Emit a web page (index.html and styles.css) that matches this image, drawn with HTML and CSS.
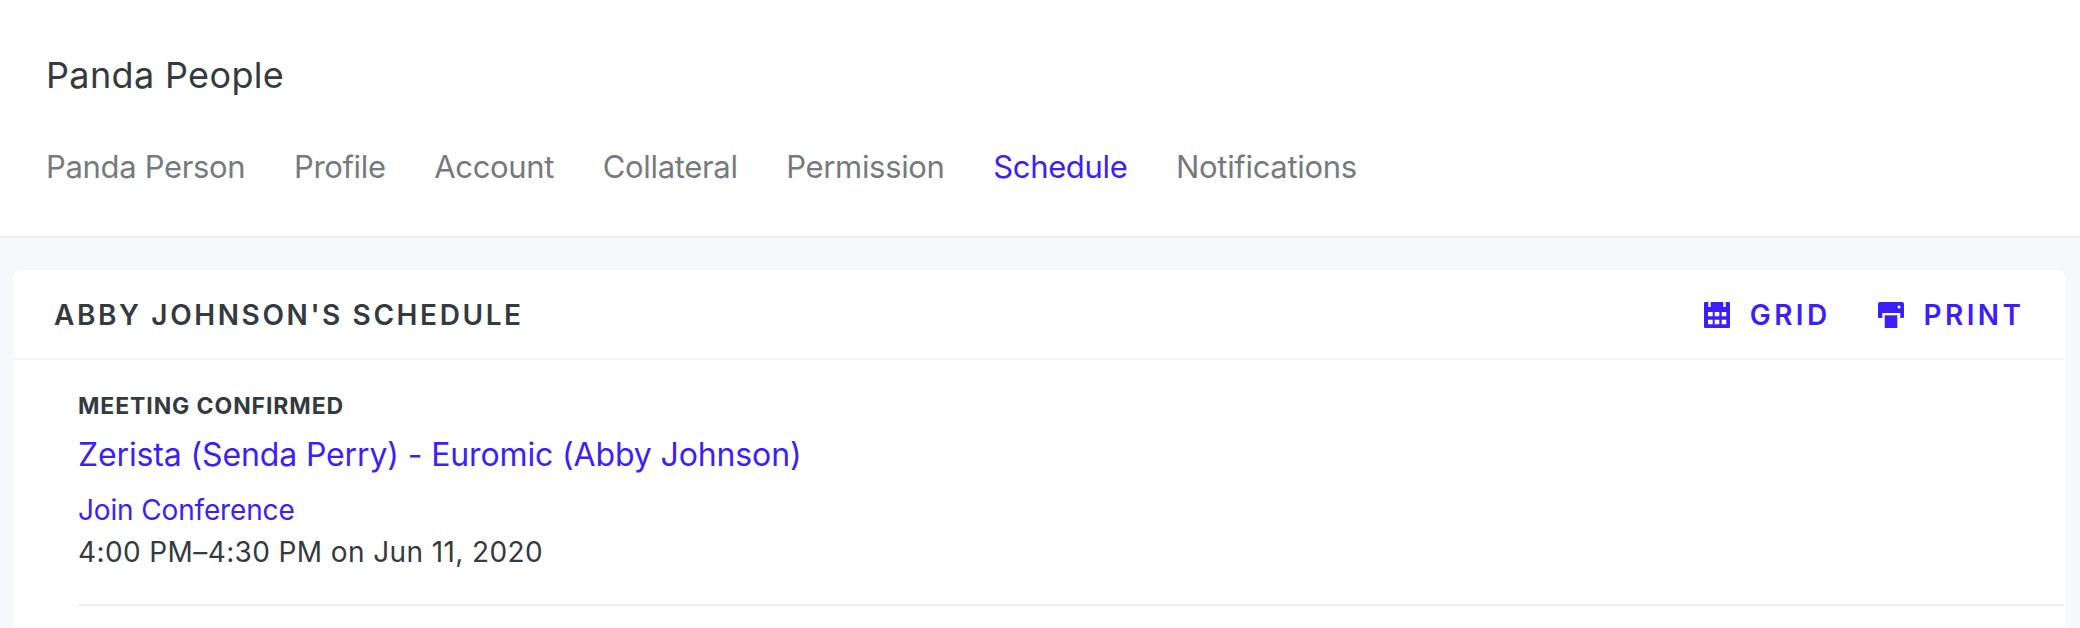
FILE: index.html
```html
<!DOCTYPE html>
<html lang="en">
<head>
<meta charset="utf-8">
<title>Panda People</title>
<link rel="stylesheet" href="styles.css">
</head>
<body>
<header class="top">
  <h1 class="title">Panda People</h1>
  <nav class="tabs">
    <a class="tab">Panda Person</a>
    <a class="tab">Profile</a>
    <a class="tab">Account</a>
    <a class="tab">Collateral</a>
    <a class="tab">Permission</a>
    <a class="tab active">Schedule</a>
    <a class="tab">Notifications</a>
  </nav>
</header>
<main class="content">
  <section class="card">
    <div class="card-head">
      <h2 class="card-title">ABBY JOHNSON'S SCHEDULE</h2>
      <div class="actions">
        <a class="action">
          <svg class="icon" viewBox="0 0 26 26"><path fill="#3c1efa" fill-rule="evenodd" d="M1 0h3.300v5h2.400V0h12.600v5h2.400V0H25a1 1 0 0 1 1 1v24a1 1 0 0 1-1 1H1a1 1 0 0 1-1-1V1a1 1 0 0 1 1-1zM4 10v4.300h4.700V10zm6.700 0v4.300h4.600V10zm7 0v4.300h4.600V10zM4 17.700v4.600h4.700v-4.600zm6.700 0v4.600h4.600v-4.600zm7 0v4.600h4.600v-4.600z"/></svg>
          <span>GRID</span>
        </a>
        <a class="action">
          <svg class="icon" viewBox="0 0 26 26"><path fill="#3c1efa" fill-rule="evenodd" d="M2 0h22a2 2 0 0 1 2 2v13a1 1 0 0 1-1 1h-2.700v-5H4.300v5H1a1 1 0 0 1-1-1V2a2 2 0 0 1 2-2zm19 3.500a1.500 1.500 0 1 0 0 3 1.500 1.500 0 0 0 0-3z"/><path fill="#3c1efa" d="M6.700 13.300h12.600V26H6.700z"/></svg>
          <span>PRINT</span>
        </a>
      </div>
    </div>
    <article class="item">
      <div class="status">MEETING CONFIRMED</div>
      <a class="meeting">Zerista (Senda Perry) - Euromic (Abby Johnson)</a>
      <a class="join">Join Conference</a>
      <div class="time">4:00 PM–4:30 PM on Jun 11, 2020</div>
    </article>
  </section>
</main>
</body>
</html>
```
FILE: styles.css
```css
* { box-sizing: border-box; }
html, body { margin: 0; height: 100%; }
body {
  font-family: "Inter", "Liberation Sans", sans-serif;
  background: #f7f8fa;
  color: #343a40;
  overflow: hidden;
}
.top {
  background: #fff;
  border-bottom: 2px solid #ebedef;
  height: 238px;
  padding: 55px 46px 0;
}
.title {
  margin: 0;
  font-size: 36px;
  font-weight: 400;
  line-height: 40px;
  letter-spacing: 0.35px;
}
.tabs {
  display: flex;
  gap: 48.6px;
  margin-top: 53px;
}
.tab {
  font-size: 31px;
  line-height: 38px;
  color: #777a7d;
  letter-spacing: -0.33px;
}
.tab.active { color: #3c1efa; }
.content { padding: 32px 14px 0 13px; }
.card {
  background: #fff;
  border-radius: 8px 8px 0 0;
  height: 358px;
  padding-right: 2px;
}
.card-head {
  display: flex;
  justify-content: space-between;
  align-items: center;
  height: 90px;
  padding: 2px 39.6px 0 41px;
  border-bottom: 2px solid #f2f6fa;
}
.card-title {
  margin: 0;
  font-size: 28px;
  font-weight: 600;
  letter-spacing: 2.6px;
}
.actions { display: flex; gap: 47px; }
.action {
  display: flex;
  align-items: center;
  gap: 20px;
  color: #3c1efa;
  font-size: 28px;
  font-weight: 600;
  letter-spacing: 3.4px;
}
.icon { width: 26px; height: 26px; display: block; }
.item {
  margin-left: 65px;
  height: 246px;
  padding-top: 32px;
  border-bottom: 2px solid #eeeff1;
}
.status {
  font-size: 23px;
  font-weight: 700;
  line-height: 28px;
  letter-spacing: 0.9px;
}
.meeting {
  display: block;
  margin-top: 16px;
  font-size: 32px;
  line-height: 38px;
  letter-spacing: -0.13px;
  color: #3c1efa;
}
.join {
  display: block;
  margin-top: 18px;
  font-size: 28px;
  line-height: 36px;
  letter-spacing: -0.15px;
  color: #3c1efa;
}
.time {
  margin-top: 6px;
  font-size: 28px;
  line-height: 36px;
  letter-spacing: 0.39px;
}
```
